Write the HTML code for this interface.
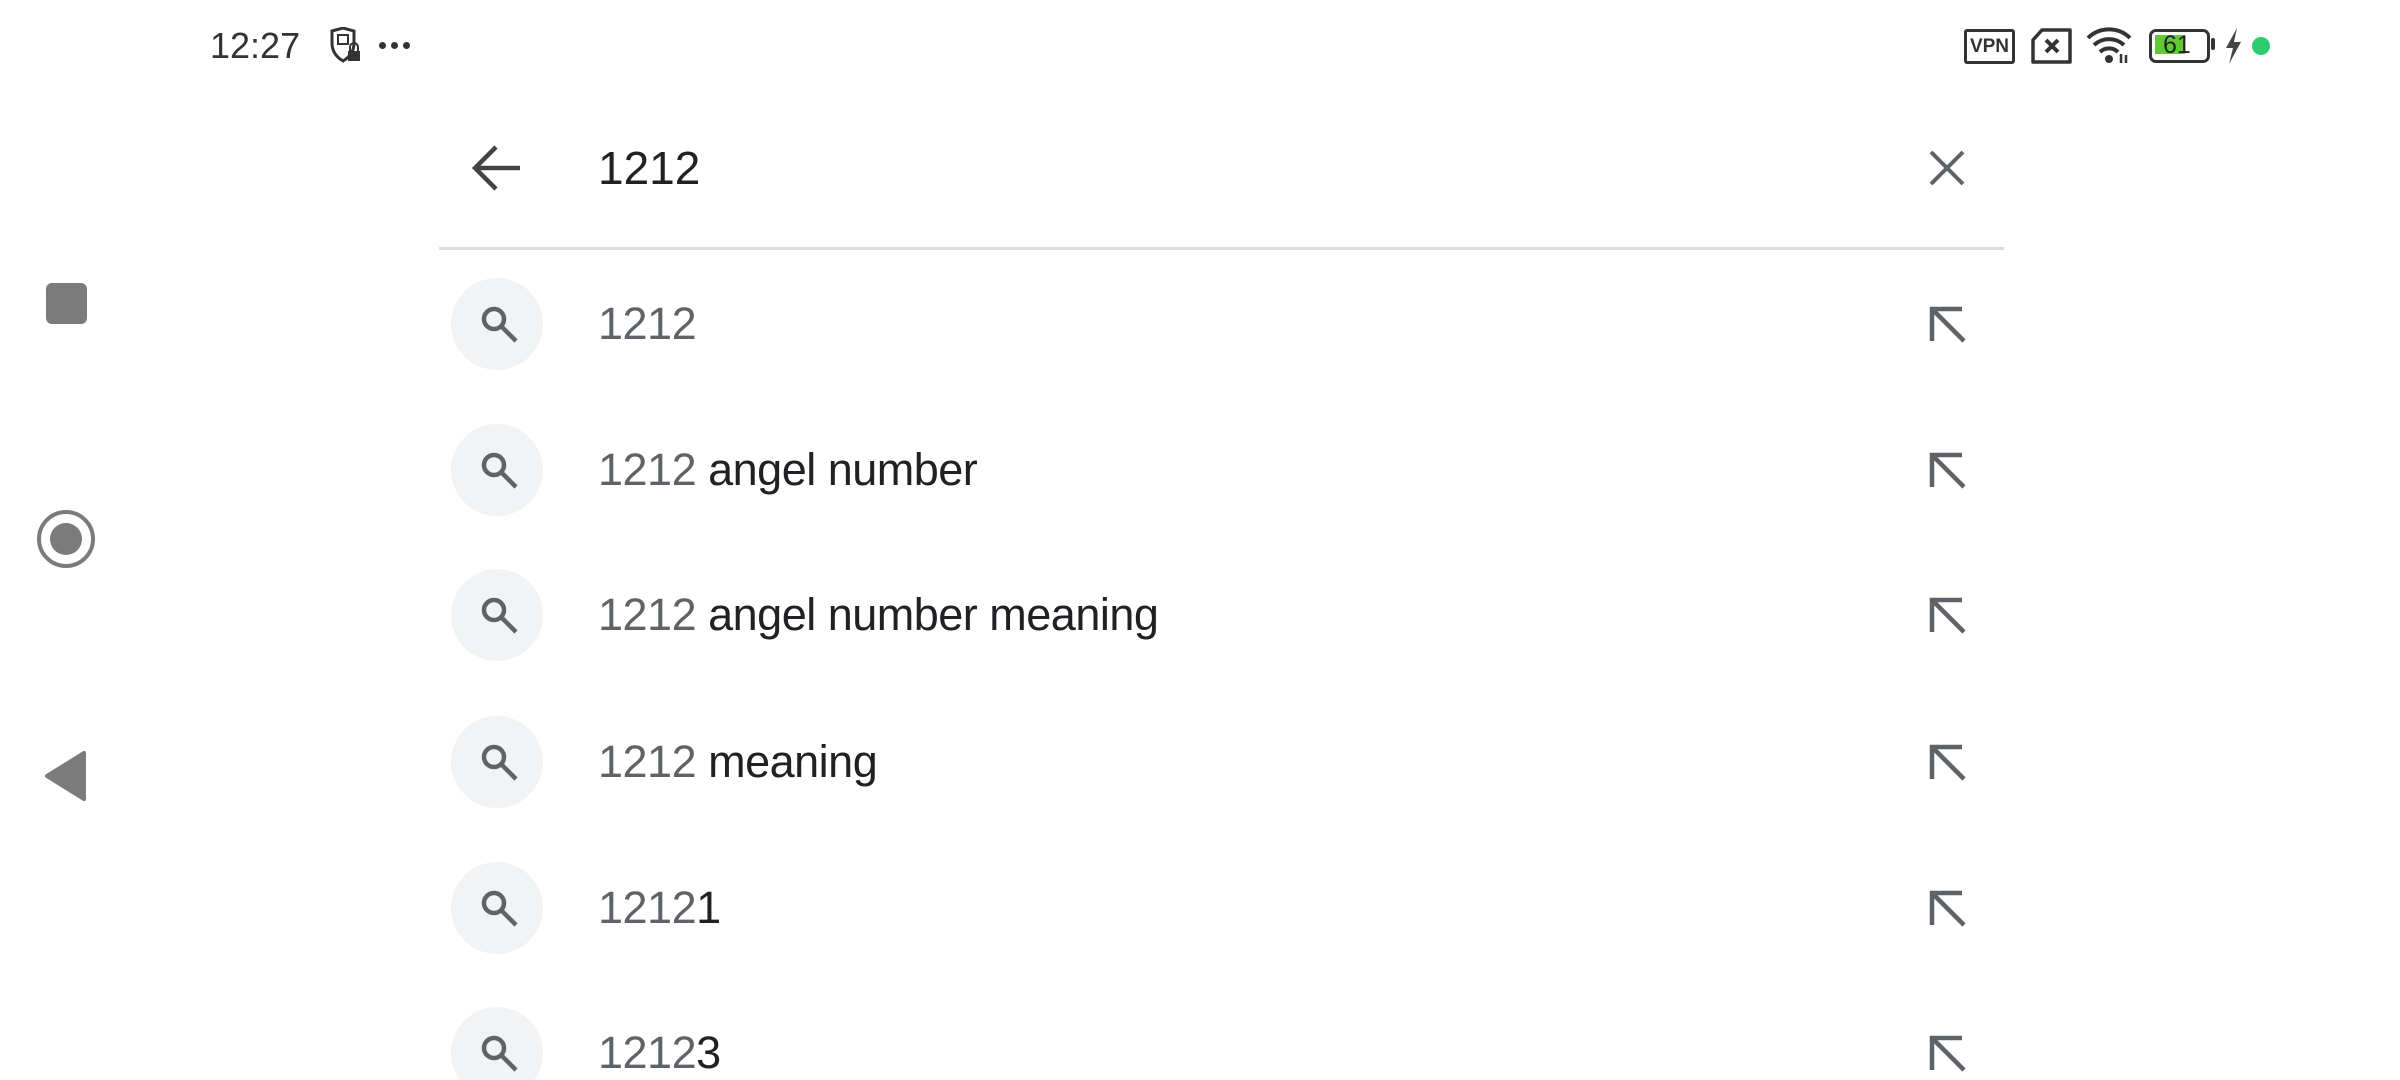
<!DOCTYPE html>
<html><head><meta charset="utf-8"><style>
html,body{margin:0;padding:0;background:#fff;width:2400px;height:1080px;overflow:hidden;position:relative;font-family:"Liberation Sans",sans-serif}
.a{position:absolute}
.row{position:absolute;left:451px;width:1560px;height:92px}
.circ{position:absolute;left:0;top:0;width:92px;height:92px;border-radius:50%;background:#f1f3f4}
.txt{position:absolute;left:147px;top:0;line-height:92px;font-size:45px;color:#202124;white-space:nowrap;letter-spacing:-0.5px}
.txt b{font-weight:normal;color:#5f6368}
.ar{position:absolute;left:1476px;top:26px}
</style></head><body>
<div class="a" style="left:210px;top:24px;font-size:36px;color:#333;line-height:44px">12:27</div>
<svg class="a" style="left:329px;top:27px" width="36" height="38" viewBox="0 0 36 38"><path d="M3 4 L14 1 L25 4 V16 C25 26 19 31 14 34 C9 31 3 26 3 16 Z" fill="none" stroke="#333" stroke-width="3"/><rect x="9" y="8" width="10" height="9" fill="none" stroke="#333" stroke-width="2"/><rect x="19" y="24" width="12" height="10" fill="#333"/><path d="M21 24 V20 A4 4 0 0 1 29 20 V24" fill="none" stroke="#333" stroke-width="2"/></svg>
<div class="a" style="left:379px;top:42px;width:7px;height:7px;border-radius:50%;background:#333"></div>
<div class="a" style="left:391px;top:42px;width:7px;height:7px;border-radius:50%;background:#333"></div>
<div class="a" style="left:403px;top:42px;width:7px;height:7px;border-radius:50%;background:#333"></div>

<div class="a" style="left:1964px;top:29px;width:45px;height:29px;border:3px solid #333;border-radius:3px;font-size:19px;font-weight:bold;color:#333;text-align:center;line-height:29px">VPN</div>
<svg class="a" style="left:2030px;top:28px" width="44" height="36" viewBox="0 0 44 36"><path d="M12 2 H40 V34 H3 V12 Z" fill="none" stroke="#333" stroke-width="3.5" stroke-linejoin="round"/><path d="M16 12 L28 24 M28 12 L16 24" stroke="#333" stroke-width="4"/></svg>
<svg class="a" style="left:2086px;top:26px" width="48" height="38" viewBox="0 0 48 38"><path d="M2 12 A30 30 0 0 1 44 12" fill="none" stroke="#333" stroke-width="4"/><path d="M8 19 A22 22 0 0 1 38 19" fill="none" stroke="#333" stroke-width="4"/><path d="M14 26 A13 13 0 0 1 32 26" fill="none" stroke="#333" stroke-width="4"/><circle cx="23" cy="33" r="4" fill="#333"/><path d="M35 28 V37 M40 29 V37" stroke="#333" stroke-width="2.5"/></svg>
<div class="a" style="left:2149px;top:29px;width:55px;height:28px;border:3px solid #333;border-radius:7px"></div>
<div class="a" style="left:2155px;top:35px;width:30px;height:19px;background:#62c935"></div>
<div class="a" style="left:2163px;top:30px;font-size:25px;color:#222;line-height:30px">61</div>
<div class="a" style="left:2211px;top:38px;width:4px;height:12px;background:#333;border-radius:2px"></div>
<svg class="a" style="left:2222px;top:28px" width="22" height="36" viewBox="0 0 22 36"><path d="M15 0 L4 20 H11 L7 36 L19 14 H12 Z" fill="#444"/></svg>
<div class="a" style="left:2252px;top:37px;width:18px;height:18px;border-radius:50%;background:#2ecc71"></div>

<div class="a" style="left:46px;top:283px;width:41px;height:41px;border-radius:6px;background:#7b7b7b"></div>
<div class="a" style="left:37px;top:510px;width:50px;height:50px;border:4px solid #7b7b7b;border-radius:50%"></div>
<div class="a" style="left:50px;top:523px;width:32px;height:32px;border-radius:50%;background:#7b7b7b"></div>
<svg class="a" style="left:44px;top:750px" width="46" height="52" viewBox="0 0 46 52"><path d="M40 3 V49 L3 26 Z" fill="#7b7b7b" stroke="#7b7b7b" stroke-width="4" stroke-linejoin="round"/></svg>

<svg class="a" style="left:472px;top:144px" width="50" height="48" viewBox="0 0 50 48"><path d="M24 3 L3 24 L24 45 M3 24 H48" fill="none" stroke="#444" stroke-width="4.5"/></svg>
<div class="a" style="left:598px;top:141px;font-size:46px;color:#202124;line-height:54px">1212</div>
<svg class="a" style="left:1928px;top:149px" width="38" height="38" viewBox="0 0 38 38"><path d="M3 3 L35 35 M35 3 L3 35" stroke="#5f6368" stroke-width="4"/></svg>
<div class="a" style="left:439px;top:247px;width:1565px;height:3px;background:#dadce0"></div>

<div class="row" style="top:278px"><div class="circ"></div><svg class="a" style="left:28px;top:26px" width="42" height="42" viewBox="0 0 42 42"><circle cx="15" cy="15" r="10" fill="none" stroke="#5f6368" stroke-width="4.5"/><path d="M22 22 L37 37" stroke="#5f6368" stroke-width="4.5"/></svg><div class="txt"><b>1212</b></div><svg class="ar" width="40" height="40" viewBox="0 0 40 40"><path d="M5 37 V5 H35 M5 5 L37 37" fill="none" stroke="#5f6368" stroke-width="4.5"/></svg></div>
<div class="row" style="top:424px"><div class="circ"></div><svg class="a" style="left:28px;top:26px" width="42" height="42" viewBox="0 0 42 42"><circle cx="15" cy="15" r="10" fill="none" stroke="#5f6368" stroke-width="4.5"/><path d="M22 22 L37 37" stroke="#5f6368" stroke-width="4.5"/></svg><div class="txt"><b>1212</b> angel number</div><svg class="ar" width="40" height="40" viewBox="0 0 40 40"><path d="M5 37 V5 H35 M5 5 L37 37" fill="none" stroke="#5f6368" stroke-width="4.5"/></svg></div>
<div class="row" style="top:569px"><div class="circ"></div><svg class="a" style="left:28px;top:26px" width="42" height="42" viewBox="0 0 42 42"><circle cx="15" cy="15" r="10" fill="none" stroke="#5f6368" stroke-width="4.5"/><path d="M22 22 L37 37" stroke="#5f6368" stroke-width="4.5"/></svg><div class="txt"><b>1212</b> angel number meaning</div><svg class="ar" width="40" height="40" viewBox="0 0 40 40"><path d="M5 37 V5 H35 M5 5 L37 37" fill="none" stroke="#5f6368" stroke-width="4.5"/></svg></div>
<div class="row" style="top:716px"><div class="circ"></div><svg class="a" style="left:28px;top:26px" width="42" height="42" viewBox="0 0 42 42"><circle cx="15" cy="15" r="10" fill="none" stroke="#5f6368" stroke-width="4.5"/><path d="M22 22 L37 37" stroke="#5f6368" stroke-width="4.5"/></svg><div class="txt"><b>1212</b> meaning</div><svg class="ar" width="40" height="40" viewBox="0 0 40 40"><path d="M5 37 V5 H35 M5 5 L37 37" fill="none" stroke="#5f6368" stroke-width="4.5"/></svg></div>
<div class="row" style="top:862px"><div class="circ"></div><svg class="a" style="left:28px;top:26px" width="42" height="42" viewBox="0 0 42 42"><circle cx="15" cy="15" r="10" fill="none" stroke="#5f6368" stroke-width="4.5"/><path d="M22 22 L37 37" stroke="#5f6368" stroke-width="4.5"/></svg><div class="txt"><b>1212</b>1</div><svg class="ar" width="40" height="40" viewBox="0 0 40 40"><path d="M5 37 V5 H35 M5 5 L37 37" fill="none" stroke="#5f6368" stroke-width="4.5"/></svg></div>
<div class="row" style="top:1007px"><div class="circ"></div><svg class="a" style="left:28px;top:26px" width="42" height="42" viewBox="0 0 42 42"><circle cx="15" cy="15" r="10" fill="none" stroke="#5f6368" stroke-width="4.5"/><path d="M22 22 L37 37" stroke="#5f6368" stroke-width="4.5"/></svg><div class="txt"><b>1212</b>3</div><svg class="ar" width="40" height="40" viewBox="0 0 40 40"><path d="M5 37 V5 H35 M5 5 L37 37" fill="none" stroke="#5f6368" stroke-width="4.5"/></svg></div>
</body></html>
